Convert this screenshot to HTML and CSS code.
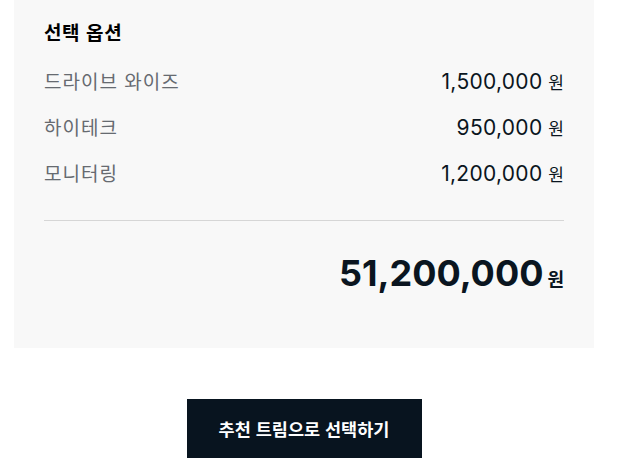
FILE: index.html
```html
<!DOCTYPE html>
<html lang="ko">
<head>
<meta charset="utf-8">
<link rel="stylesheet" href="styles.css">
</head>
<body>
<div class="page">
  <section class="panel">
    <h2 class="title">선택 옵션</h2>
    <ul class="options">
      <li class="row"><span class="label">드라이브 와이즈</span><span class="price"><span class="num">1,500,000</span> <span class="won">원</span></span></li>
      <li class="row"><span class="label">하이테크</span><span class="price"><span class="num">950,000</span> <span class="won">원</span></span></li>
      <li class="row"><span class="label">모니터링</span><span class="price"><span class="num">1,200,000</span> <span class="won">원</span></span></li>
    </ul>
    <div class="total"><span class="total-num">51,200,000</span><span class="total-won">원</span></div>
  </section>
  <div class="actions">
    <button class="cta">추천 트림으로 선택하기</button>
  </div>
</div>
</body>
</html>
```
FILE: styles.css
```css
html, body {
  margin: 0;
  padding: 0;
  background: #ffffff;
}
body {
  font-family: "Noto Sans CJK KR", "Noto Sans", sans-serif;
  color: #0a1520;
}
.page {
  width: 580px;
  margin-left: 14px;
}
.panel {
  background: #f8f8f8;
  padding: 18px 30px 0 30px;
  height: 330px;
}
.title {
  margin: 0;
  font-size: 19px;
  letter-spacing: 0.6px;
  font-weight: 700;
  line-height: 28px;
  color: #000;
}
.options {
  list-style: none;
  margin: 11px 0 0 0;
  padding: 0 0 25px 0;
  border-bottom: 1px solid #d6d6d6;
}
.row {
  display: flex;
  justify-content: space-between;
  align-items: center;
  height: 46px;
}
.label {
  font-size: 19px;
  letter-spacing: 1px;
  color: #666a70;
}
.price {
  font-size: 21px;
  color: #0a1520;
}
.num {
  font-family: "Inter", "Noto Sans", sans-serif;
  letter-spacing: 0.3px;
}
.won {
  font-size: 17px;
}
.total {
  display: flex;
  justify-content: flex-end;
  align-items: baseline;
  gap: 4px;
  margin-top: 28px;
}
.total-num {
  font-family: "Inter", "Noto Sans", sans-serif;
  font-weight: 700;
  font-size: 36px;
  line-height: 48px;
}
.total-won {
  font-size: 18px;
  font-weight: 700;
}
.actions {
  display: flex;
  justify-content: center;
  padding-top: 51px;
}
.cta {
  width: 235px;
  height: 59px;
  border: 0;
  border-radius: 0;
  background: #08141f;
  color: #fff;
  font-family: "Noto Sans CJK KR", sans-serif;
  font-size: 17.5px;
  font-weight: 700;
}
```
